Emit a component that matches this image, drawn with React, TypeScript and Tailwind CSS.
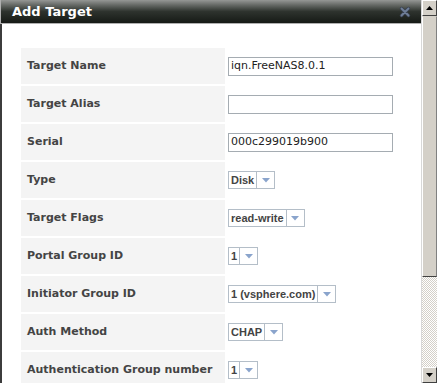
const rows: { label: string; kind: "input" | "select"; value: string }[] = [
  { label: "Target Name", kind: "input", value: "iqn.FreeNAS8.0.1" },
  { label: "Target Alias", kind: "input", value: "" },
  { label: "Serial", kind: "input", value: "000c299019b900" },
  { label: "Type", kind: "select", value: "Disk" },
  { label: "Target Flags", kind: "select", value: "read-write" },
  { label: "Portal Group ID", kind: "select", value: "1" },
  { label: "Initiator Group ID", kind: "select", value: "1 (vsphere.com)" },
  { label: "Auth Method", kind: "select", value: "CHAP" },
  { label: "Authentication Group number", kind: "select", value: "1" },
];

function Select({ value }: { value: string }) {
  return (
    <div className="flex h-[18px] border border-[#b4bec8] bg-white">
      <span className="flex items-center px-[2px] font-['Liberation_Sans',sans-serif] text-[11px] font-bold text-[#444] border-r border-[#b4bec8]">
        {value}
      </span>
      <span className="flex w-[17px] items-center justify-center">
        <svg width="8" height="5" viewBox="0 0 8 5">
          <path d="M0 0h8L4 4.5z" fill="#8aa4cc" />
        </svg>
      </span>
    </div>
  );
}

function ScrollButton({ up }: { up?: boolean }) {
  return (
    <div className="flex h-[16px] shrink-0 items-center justify-center border border-t-white border-l-white border-r-[#404040] border-b-[#404040] bg-[#d4d0c8]">
      <svg width="7" height="4" viewBox="0 0 7 4">
        <path d={up ? "M0 4h7L3.5 0z" : "M0 0h7L3.5 4z"} fill="#000" />
      </svg>
    </div>
  );
}

export default function App() {
  return (
    <div className="flex h-[383px] w-[437px] overflow-hidden bg-white font-['DejaVu_Sans',sans-serif]">
      <div className="flex min-w-0 flex-1 flex-col border-r border-[#d8d8d8]">
        <div className="flex h-[24px] shrink-0 items-center justify-between border-b border-l border-[#b0b0b0] bg-gradient-to-b from-[#959795] via-[#2e332e] to-[#161a16] pl-[11px] pr-[10px]">
          <span className="text-[13px] font-bold text-white">Add Target</span>
          <svg width="12" height="12" viewBox="0 0 12 12">
            <path d="M2.5 2.5l7 7M9.5 2.5l-7 7" stroke="#3a4252" strokeWidth="3.5" strokeLinecap="round" />
            <path d="M2.5 2.5l7 7M9.5 2.5l-7 7" stroke="#6f7f98" strokeWidth="1.8" strokeLinecap="round" />
          </svg>
        </div>
        <div className="flex min-h-0 flex-1 flex-col gap-[2px] overflow-hidden border-l-2 border-[#3c3c3c] pl-[19px] pt-[24px]">
          {rows.map((r) => (
            <div key={r.label} className="flex h-[36px] shrink-0">
              <div className="flex w-[204px] items-center bg-[#f4f4f4] pl-[6px] text-[11px] font-bold text-[#444] whitespace-nowrap">
                {r.label}
              </div>
              <div className="flex items-center pl-[3px]">
                {r.kind === "input" ? (
                  <div className="flex h-[19px] w-[165px] items-center border border-[#a5acb2] px-[2px] text-[11px] text-[#222]">
                    {r.value}
                  </div>
                ) : (
                  <Select value={r.value} />
                )}
              </div>
            </div>
          ))}
        </div>
      </div>
      <div className="flex w-[15px] shrink-0 flex-col">
        <ScrollButton up />
        <div className="h-[261px] shrink-0 border border-t-[#d4d0c8] border-l-white border-r-[#808080] border-b-[#404040] bg-[#d4d0c8]" />
        <div className="flex-1 bg-[repeating-conic-gradient(#d4d0c8_0%_25%,#ffffff_0%_50%)] bg-[length:2px_2px]" />
        <ScrollButton />
      </div>
    </div>
  );
}
